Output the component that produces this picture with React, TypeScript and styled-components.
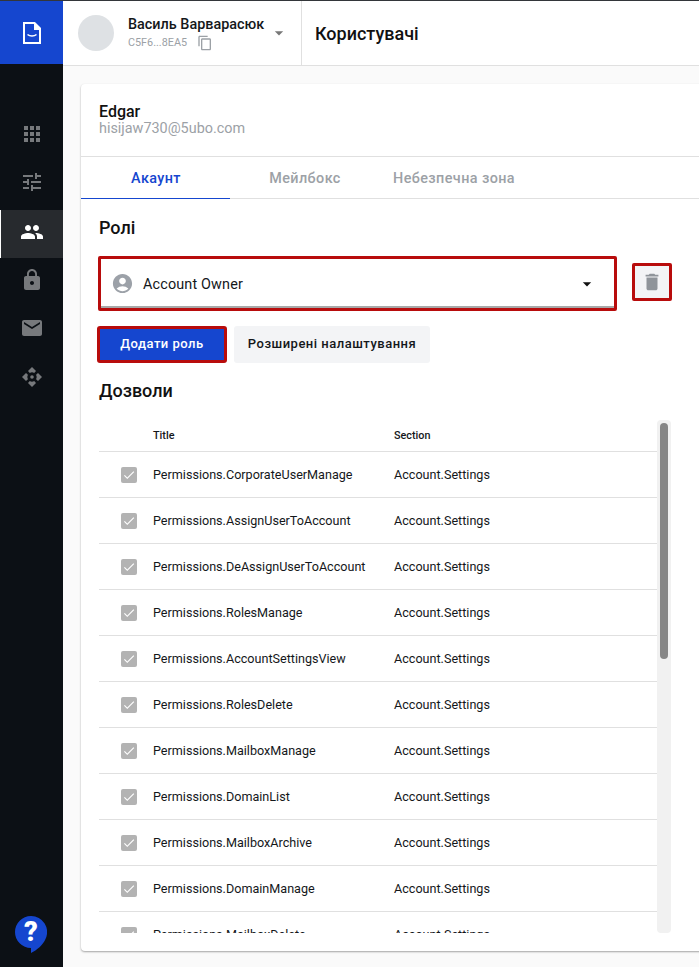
import styled, { createGlobalStyle } from "styled-components";
import {
  MdApps,
  MdTune,
  MdPeople,
  MdLock,
  MdEmail,
  MdContentCopy,
  MdDelete,
  MdAccountCircle,
  MdArrowDropDown,
  MdCheck,
} from "react-icons/md";

const permissions = [
  "CorporateUserManage",
  "AssignUserToAccount",
  "DeAssignUserToAccount",
  "RolesManage",
  "AccountSettingsView",
  "RolesDelete",
  "MailboxManage",
  "DomainList",
  "MailboxArchive",
  "DomainManage",
  "MailboxDelete",
];

const GlobalStyle = createGlobalStyle`
  html, body {
    margin: 0;
    padding: 0;
    height: 100%;
    overflow: hidden;
    font-family: Roboto, "Liberation Sans", sans-serif;
    background: #fafafa;
  }
  * { box-sizing: border-box; }
`;

const Page = styled.div`
  display: flex;
  width: 699px;
  height: 967px;
  overflow: hidden;
  border-top: 1px solid #33363a;
`;

const Sidebar = styled.aside`
  width: 63px;
  flex: none;
  display: flex;
  flex-direction: column;
  background: #0c1015;
`;

const Logo = styled.div`
  height: 63px;
  display: flex;
  align-items: center;
  justify-content: center;
  padding-left: 1px;
  background: #1546cf;
  color: #fff;
`;

const NavList = styled.nav`
  display: flex;
  flex-direction: column;
  margin-top: 48px;
  flex: 1;
`;

const NavItem = styled.div<{ $active?: boolean; $tall?: boolean; $drop?: boolean }>`
  height: ${(p) => (p.$tall ? "50px" : "48px")};
  display: flex;
  align-items: center;
  justify-content: center;
  padding-bottom: ${(p) => (p.$tall ? "6px" : p.$drop ? "2px" : "4px")};
  color: ${(p) => (p.$active ? "#fff" : "#77797c")};
  background: ${(p) => (p.$active ? "#272a2e" : "transparent")};
  border-left: 1px solid ${(p) => (p.$active ? "#fff" : "transparent")};
  font-size: 24px;
`;

const HelpWrap = styled.div`
  display: flex;
  justify-content: center;
  padding-bottom: 14px;
  padding-right: 2px;
`;

const Main = styled.div`
  flex: 1;
  min-width: 0;
  display: flex;
  flex-direction: column;
`;

const TopBar = styled.header`
  height: 65px;
  flex: none;
  display: flex;
  background: #fff;
  border-bottom: 1px solid #e0e0e0;
`;

const AccountBox = styled.div`
  width: 239px;
  display: flex;
  align-items: center;
  padding-left: 15px;
  border-right: 1px solid #e0e0e0;
`;

const AvatarCircle = styled.div`
  width: 36px;
  height: 36px;
  border-radius: 50%;
  background: #dee1e4;
  flex: none;
`;

const AccountInfo = styled.div`
  margin-left: 14px;
  display: flex;
  flex-direction: column;
  width: 141px;
`;

const AccountName = styled.div`
  font-size: 14.4px;
  font-weight: 500;
  line-height: 18px;
  color: #14171a;
  white-space: nowrap;
`;

const AccountIdRow = styled.div`
  display: flex;
  align-items: center;
  gap: 10px;
  font-size: 10.8px;
  color: #9ca1a6;
  line-height: 16px;
  margin-top: 1px;
`;

const Caret = styled.div`
  color: #777;
  display: flex;
  margin-top: -1px;
`;

const PageTitle = styled.h1`
  margin: 0 0 0 13px;
  align-self: center;
  font-size: 18px;
  font-weight: 500;
  color: #111;
`;

const Content = styled.main`
  flex: 1;
  min-height: 0;
  padding: 18px 0 15px 18px;
  background: #fafafa;
`;

const Card = styled.section`
  width: 680px;
  height: 867px;
  display: flex;
  flex-direction: column;
  background: #fff;
  border-radius: 4px;
  box-shadow: 0 1px 2px rgba(0, 0, 0, 0.35);
`;

const UserHead = styled.div`
  height: 73px;
  flex: none;
  padding: 19px 18px 0;
  border-bottom: 1px solid #e0e0e0;
`;

const UserName = styled.div`
  font-size: 16px;
  font-weight: 500;
  line-height: 18px;
  color: #111;
`;

const UserMail = styled.div`
  font-size: 14.4px;
  line-height: 16px;
  color: #9ca1a6;
`;

const Tabs = styled.div`
  height: 42px;
  flex: none;
  display: flex;
  border-bottom: 1px solid #e0e0e0;
`;

const Tab = styled.div<{ $active?: boolean }>`
  width: 149px;
  height: 42px;
  display: flex;
  align-items: center;
  justify-content: center;
  padding: 1px 0 0 1px;
  font-size: 14.4px;
  font-weight: 500;
  letter-spacing: 0.4px;
  white-space: nowrap;
  color: ${(p) => (p.$active ? "#1546cf" : "#9ca1a6")};
  border-bottom: 1px solid ${(p) => (p.$active ? "#1546cf" : "transparent")};
`;

const Body = styled.div`
  flex: 1;
  min-height: 0;
  display: flex;
  flex-direction: column;
  padding: 18px 0 18px 18px;
`;

const SectionTitle = styled.h2`
  margin: 0;
  font-size: 18px;
  line-height: 22px;
  font-weight: 500;
  color: #111;
`;

const RoleRow = styled.div`
  display: flex;
  align-items: center;
  gap: 15px;
  margin-top: 17px;
  margin-left: -1px;
`;

const RoleSelect = styled.div`
  width: 519px;
  height: 55px;
  display: flex;
  align-items: center;
  padding: 0 17px 0 10px;
  border: 3px solid #b80c0c;
  border-radius: 2px;
  box-shadow: inset 0 -2px 0 #a8a8a8;
  font-size: 14.4px;
  letter-spacing: 0.15px;
  color: #14171a;
`;

const RoleIcon = styled.span`
  display: flex;
  color: #9ca1a8;
  margin-right: 9px;
`;

const RoleLabel = styled.span`
  flex: 1;
  padding-top: 2px;
`;

const SelectCaret = styled.span`
  display: flex;
  color: #111;
`;

const TrashButton = styled.button`
  width: 40px;
  height: 38px;
  display: flex;
  align-items: center;
  justify-content: center;
  padding: 0;
  margin-bottom: 4px;
  background: #f3f4f6;
  border: 3px solid #b80c0c;
  border-radius: 2px;
  color: #8f949a;
`;

const ButtonRow = styled.div`
  display: flex;
  gap: 7px;
  margin-top: 15px;
  margin-left: -2px;
`;

const ActionButton = styled.button<{ $primary?: boolean }>`
  height: 37px;
  display: flex;
  align-items: center;
  justify-content: center;
  padding: 0 0 2px;
  font-family: inherit;
  font-size: 13px;
  font-weight: 500;
  letter-spacing: 0.5px;
  border-radius: 3px;
  width: ${(p) => (p.$primary ? "130px" : "196px")};
  color: ${(p) => (p.$primary ? "#fff" : "#14171a")};
  background: ${(p) => (p.$primary ? "#1546cf" : "#f3f4f6")};
  border: ${(p) => (p.$primary ? "3px solid #b80c0c" : "none")};
`;

const PermissionsTitle = styled(SectionTitle)`
  margin-top: 17px;
`;

const TableArea = styled.div`
  flex: 1;
  min-height: 0;
  display: flex;
  margin-top: 18px;
`;

const Table = styled.div`
  width: 558px;
  height: 513px;
  overflow: hidden;
`;

const Row = styled.div<{ $head?: boolean }>`
  display: grid;
  grid-template-columns: 54px 241px 1fr;
  align-items: center;
  height: ${(p) => (p.$head ? "32px" : "46px")};
  border-bottom: 1px solid #e0e0e0;
  font-size: ${(p) => (p.$head ? "10.8px" : "12.6px")};
  font-weight: ${(p) => (p.$head ? 500 : 400)};
  color: #14171a;
`;

const Check = styled.span`
  width: 16px;
  height: 16px;
  margin-left: 22px;
  display: flex;
  align-items: center;
  justify-content: center;
  background: #b3b3b3;
  border-radius: 2px;
  color: #fff;
`;

const Track = styled.div`
  width: 14px;
  height: 513px;
  flex: none;
  padding: 3px;
  background: #f1f1f1;
  border-radius: 4px;
`;

const Thumb = styled.div`
  width: 8px;
  height: 236px;
  background: #868686;
  border-radius: 4px;
`;

const FileLogo = () => (
  <svg width="18" height="22" viewBox="0 0 18 22" fill="none">
    <path d="M1 1h10.500L17 6.500V21H1z" stroke="#fff" strokeWidth="2" />
    <path d="M11 0.500h1L18 6.500V8h-7z" fill="#fff" />
    <path d="M4.500 12.500c2.500 2 6.500 2 9 0" stroke="#fff" strokeWidth="1.600" />
  </svg>
);

const HubIcon = () => (
  <svg width="20" height="20" viewBox="0 0 20 20" fill="currentColor">
    <path d="M10 0l4 4-1.800 1.900a4.500 4.500 0 0 0-4.400 0L6 4z" />
    <path d="M10 20l4-4-1.800-1.900a4.500 4.500 0 0 1-4.400 0L6 16z" />
    <path d="M0 10l4-4 1.900 1.800a4.500 4.500 0 0 0 0 4.400L4 14z" />
    <path d="M20 10l-4-4-1.900 1.800a4.500 4.500 0 0 1 0 4.400L16 14z" />
    <circle cx="10" cy="10" r="1.800" />
  </svg>
);

const HelpIcon = () => (
  <svg width="32" height="37" viewBox="0 0 32 37">
    <path d="M16 0a16 16 0 1 0 0 32v5c6-3 12-8 14.500-14A16 16 0 0 0 16 0z" fill="#1546cf" />
    <text x="16" y="25" textAnchor="middle" fontFamily="Roboto, sans-serif" fontWeight="900" fontSize="27" fill="#fff">?</text>
  </svg>
);

export default function App() {
  return (
    <>
      <GlobalStyle />
      <Page>
        <Sidebar>
          <Logo>
            <FileLogo />
          </Logo>
          <NavList>
            <NavItem><MdApps /></NavItem>
            <NavItem $tall><MdTune /></NavItem>
            <NavItem $active><MdPeople /></NavItem>
            <NavItem><MdLock /></NavItem>
            <NavItem><MdEmail /></NavItem>
            <NavItem $drop><HubIcon /></NavItem>
          </NavList>
          <HelpWrap>
            <HelpIcon />
          </HelpWrap>
        </Sidebar>
        <Main>
          <TopBar>
            <AccountBox>
              <AvatarCircle />
              <AccountInfo>
                <AccountName>Василь Варварасюк</AccountName>
                <AccountIdRow>
                  C5F6...8EA5
                  <MdContentCopy size={16} />
                </AccountIdRow>
              </AccountInfo>
              <Caret>
                <MdArrowDropDown size={20} />
              </Caret>
            </AccountBox>
            <PageTitle>Користувачі</PageTitle>
          </TopBar>
          <Content>
            <Card>
              <UserHead>
                <UserName>Edgar</UserName>
                <UserMail>hisijaw730@5ubo.com</UserMail>
              </UserHead>
              <Tabs>
                <Tab $active>Акаунт</Tab>
                <Tab>Мейлбокс</Tab>
                <Tab>Небезпечна зона</Tab>
              </Tabs>
              <Body>
                <SectionTitle>Ролі</SectionTitle>
                <RoleRow>
                  <RoleSelect>
                    <RoleIcon><MdAccountCircle size={23} /></RoleIcon>
                    <RoleLabel>Account Owner</RoleLabel>
                    <SelectCaret><MdArrowDropDown size={20} /></SelectCaret>
                  </RoleSelect>
                  <TrashButton><MdDelete size={22} /></TrashButton>
                </RoleRow>
                <ButtonRow>
                  <ActionButton $primary>Додати роль</ActionButton>
                  <ActionButton>Розширені налаштування</ActionButton>
                </ButtonRow>
                <PermissionsTitle>Дозволи</PermissionsTitle>
                <TableArea>
                  <Table>
                    <Row $head>
                      <span />
                      <span>Title</span>
                      <span>Section</span>
                    </Row>
                    {permissions.map((name) => (
                      <Row key={name}>
                        <Check><MdCheck size={14} /></Check>
                        <span>Permissions.{name}</span>
                        <span>Account.Settings</span>
                      </Row>
                    ))}
                  </Table>
                  <Track>
                    <Thumb />
                  </Track>
                </TableArea>
              </Body>
            </Card>
          </Content>
        </Main>
      </Page>
    </>
  );
}
